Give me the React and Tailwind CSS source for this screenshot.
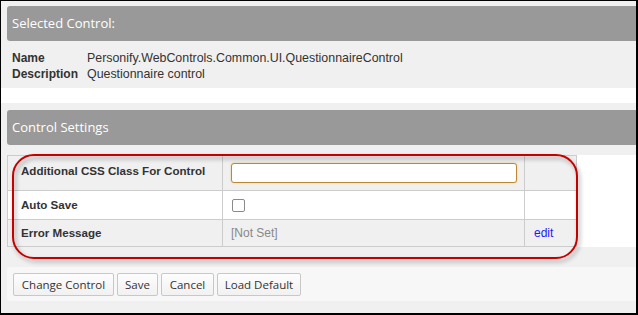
import React from "react";

const sans = { fontFamily: '"Liberation Sans", Arial, sans-serif' };

function Header({ children }) {
  return (
    <div
      className="h-[35px] bg-[#999999] rounded-l-[3px] flex items-center pl-[5px] text-white text-[13px]"
      style={{ fontFamily: '"Open Sans", sans-serif' }}
    >
      {children}
    </div>
  );
}

function Btn({ children, w }) {
  return (
    <button
      className={`h-[23px] ${w} border border-[#c8c8c8] rounded-[2px] bg-gradient-to-b from-[#fdfdfd] to-[#f1f1f1] text-[#333] text-[11.5px] flex items-center justify-center`}
      style={{ fontFamily: '"Open Sans", sans-serif' }}
    >
      {children}
    </button>
  );
}

export default function App() {
  return (
    <div
      className="w-[638px] h-[315px] border-t border-l border-r-2 border-b-2 border-black bg-white flex flex-col overflow-hidden relative"
      style={sans}
    >
      {/* Selected Control panel */}
      <div className="bg-[#f0f0f0] pt-[5px] pl-[6px] pb-[6px] shrink-0">
        <Header>Selected Control:</Header>
        <div className="mt-[9px] pl-[5px] text-[#333] leading-[16px]">
          <div className="flex items-baseline">
            <span className="w-[75px] font-bold text-[12px]">Name</span>
            <span className="text-[12.4px]">Personify.WebControls.Common.UI.QuestionnaireControl</span>
          </div>
          <div className="flex items-baseline">
            <span className="w-[75px] font-bold text-[12px]">Description</span>
            <span className="text-[12.4px]">Questionnaire control</span>
          </div>
        </div>
      </div>

      <div className="h-[15px] shrink-0 bg-white" />

      {/* Control Settings panel */}
      <div className="flex-1 bg-[#f0f0f0] pt-[7px] flex flex-col">
        <div className="pl-[6px]">
          <Header>Control Settings</Header>
        </div>
        <div className="mt-[10px] flex">
          <div className="w-[6px] bg-[#f0f0f0]" />
          <div className="border-l border-t border-[#cccccc] grid grid-cols-[215px_302px_52px] text-[12px] text-[#333]">
            {/* row 1 */}
            <div className="h-[35px] bg-[#f0f0f0] border-r border-b border-[#cccccc] pl-[13px] pt-[6px] font-bold text-[11.6px]">
              Additional CSS Class For Control
            </div>
            <div className="h-[35px] bg-[#f0f0f0] border-r border-b border-[#cccccc] pl-[8px] pt-[7px]">
              <div className="w-[286px] h-[20px] bg-white border border-[#b98a35] rounded-[3px] shadow-[0_0_2px_#f0c070]" />
            </div>
            <div className="h-[35px] bg-[#f0f0f0] border-r border-b border-[#cccccc]" />
            {/* row 2 */}
            <div className="h-[29px] bg-white border-r border-b border-[#cccccc] pl-[13px] flex items-center font-bold text-[11.6px]">
              Auto Save
            </div>
            <div className="h-[29px] bg-white border-r border-b border-[#cccccc] pl-[9px] flex items-center">
              <span className="w-[13px] h-[13px] border border-[#8a8a8a] rounded-[2px] bg-white" />
            </div>
            <div className="h-[29px] bg-white border-r border-b border-[#cccccc]" />
            {/* row 3 */}
            <div className="h-[27px] bg-[#f0f0f0] border-r border-b border-[#cccccc] pl-[13px] flex items-center font-bold text-[11.6px]">
              Error Message
            </div>
            <div className="h-[27px] bg-[#f0f0f0] border-r border-b border-[#cccccc] pl-[8px] flex items-center text-[#888]">
              [Not Set]
            </div>
            <div className="h-[27px] bg-[#f0f0f0] border-r border-b border-[#cccccc] pl-[9px] flex items-center text-[#1a1aff]">
              edit
            </div>
          </div>
          <div className="flex-1 bg-white" />
        </div>
        <div className="mt-[20px] ml-[6px] h-[34px] bg-[#f7f7f7] rounded-l-[3px] flex items-start pt-[6px] pl-[6px] gap-[3px]">
          <Btn w="w-[101px]">Change Control</Btn>
          <Btn w="w-[41px]">Save</Btn>
          <Btn w="w-[53px]">Cancel</Btn>
          <Btn w="w-[84px]">Load Default</Btn>
        </div>
      </div>

      {/* red annotation */}
      <div className="absolute left-[11px] top-[153px] w-[566px] h-[105px] border-2 border-[#c40000] rounded-[22px] pointer-events-none drop-shadow-[2px_3px_2px_rgba(0,0,0,0.35)]" />
    </div>
  );
}
